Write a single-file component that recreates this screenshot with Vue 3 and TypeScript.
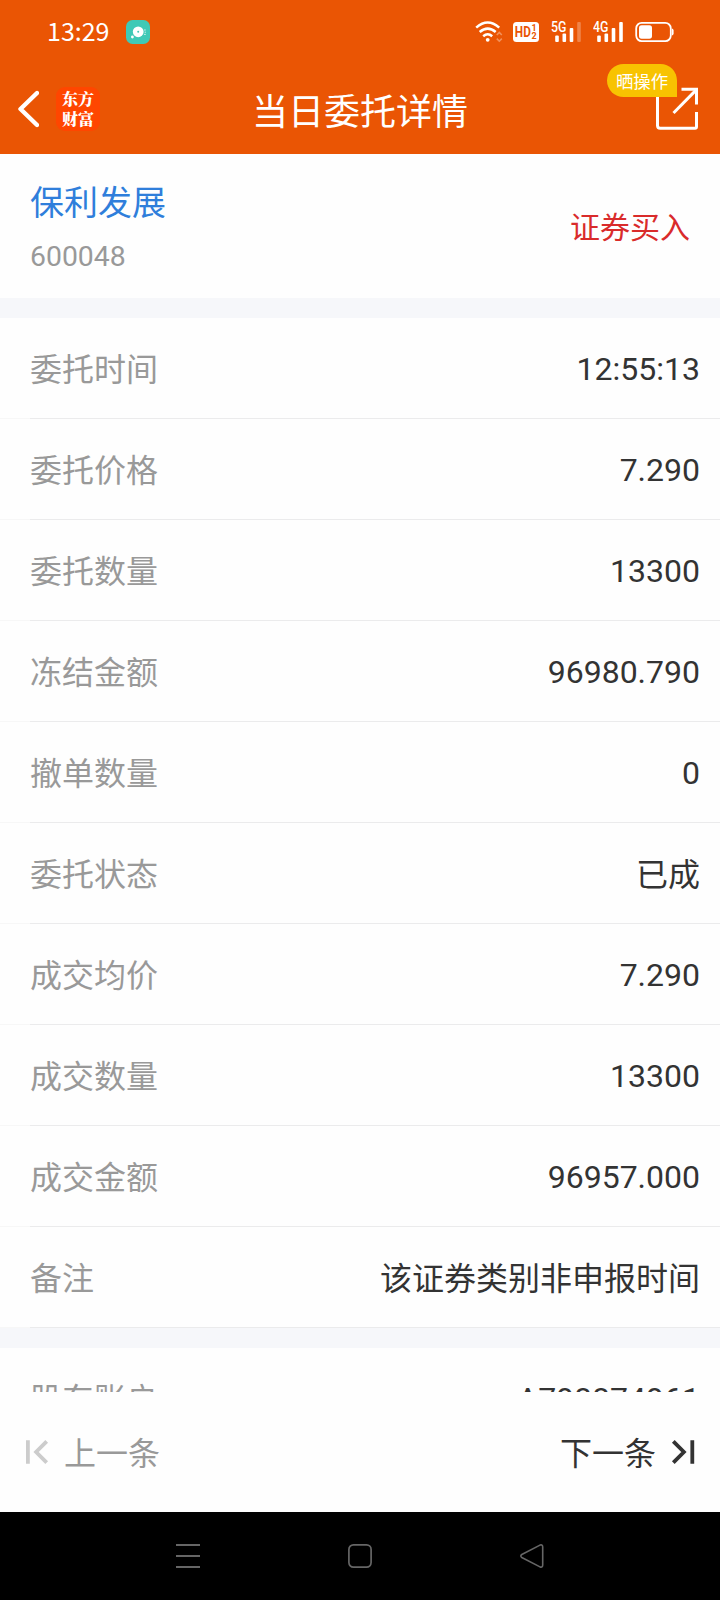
<script setup lang="ts">
interface Row {
  label: string
  value: string
}

const rows: Row[] = [
  { label: '委托时间', value: '12:55:13' },
  { label: '委托价格', value: '7.290' },
  { label: '委托数量', value: '13300' },
  { label: '冻结金额', value: '96980.790' },
  { label: '撤单数量', value: '0' },
  { label: '委托状态', value: '已成' },
  { label: '成交均价', value: '7.290' },
  { label: '成交数量', value: '13300' },
  { label: '成交金额', value: '96957.000' },
  { label: '备注', value: '该证券类别非申报时间' },
]

const accountRows: Row[] = [{ label: '股东账户', value: 'A798874961' }]

const isHan = (text: string): boolean => /[\u4e00-\u9fff]/.test(text)
</script>

<template>
  <div class="screen">
    <div class="status">
      <span class="clock">13:29</span>
      <svg class="app-dot" width="24" height="24" viewBox="0 0 24 24">
        <rect width="24" height="24" rx="6.5" fill="#3fc9b6" />
        <circle cx="12.2" cy="11.8" r="5.4" fill="#fff" />
        <circle cx="12.2" cy="11.8" r="1" fill="#3fc9b6" />
        <circle cx="6.4" cy="17" r="1.4" fill="#fff" />
        <path d="M18 10h1.8M18.6 12.2h1.4M18 14.4h1.8" stroke="#fff" stroke-width="1" opacity=".7" />
      </svg>
      <div class="indicators">
        <svg class="wifi" width="28" height="22" viewBox="0 0 28 22" fill="none" stroke="#fff">
          <path d="M1.2 6.6Q12.7-3.6 24.2 6.6M4.7 11Q12.7 4.2 20.7 11M8.2 15.2Q12.7 11.3 17.2 15.2" stroke-width="2.5" />
          <circle cx="12.7" cy="18.8" r="1.9" fill="#fff" stroke="none" />
          <path d="M21.8 14l2.5-2.6 2.5 2.6M21.8 17.6l2.5 2.6 2.5-2.6" stroke-width="1.6" opacity=".35" />
        </svg>
        <svg class="hd" width="26" height="20" viewBox="0 0 26 20">
          <rect width="26" height="20" rx="3.5" fill="#fff" />
          <text class="hd-main" x="1.8" y="15.4" textLength="16" lengthAdjust="spacingAndGlyphs">HD</text>
          <text class="hd-sim" x="18.600" y="8.800">1</text>
          <text class="hd-sim" x="18.600" y="16.600">2</text>
        </svg>
        <svg class="net" width="31" height="22" viewBox="0 0 31 22" fill="#fff">
          <text x="0" y="11.2" textLength="15.4" lengthAdjust="spacingAndGlyphs">5G</text>
          <rect x="4.2" y="14.5" width="3.6" height="6.5" rx="1" />
          <rect x="11.5" y="12.5" width="3.6" height="8.5" rx="1" />
          <rect x="18.7" y="7" width="3.6" height="14" rx="1" />
          <rect x="26.2" y="1" width="3.6" height="20" rx="1" opacity=".28" />
        </svg>
        <svg class="net" width="31" height="22" viewBox="0 0 31 22" fill="#fff">
          <text x="0" y="11.2" textLength="15.4" lengthAdjust="spacingAndGlyphs">4G</text>
          <rect x="4.2" y="14.5" width="3.6" height="6.5" rx="1" />
          <rect x="11.5" y="12.5" width="3.6" height="8.5" rx="1" />
          <rect x="18.7" y="7" width="3.6" height="14" rx="1" />
          <rect x="26.2" y="1" width="3.6" height="20" rx="1" />
        </svg>
        <svg width="39" height="22" viewBox="0 0 39 22">
          <rect x="1.2" y="1.9" width="34.6" height="18.2" rx="5.5" fill="none" stroke="#fff" stroke-width="1.8" />
          <rect x="4" y="4.3" width="13" height="13.4" rx="2.6" fill="#fff" />
          <path d="M37 7.5q1.6.3 1.6 2v3q0 1.7-1.6 2z" fill="#fff" />
        </svg>
      </div>
    </div>

    <header class="header">
      <svg class="back" width="22" height="38" viewBox="0 0 22 38" fill="none" stroke="#fff" stroke-width="4.4" stroke-linecap="round" stroke-linejoin="round">
        <path d="M20 3L3.500 19L20 35" />
      </svg>
      <div class="logo"><span>东方</span><span>财富</span></div>
      <h1 class="title">当日委托详情</h1>
      <div class="share">
        <svg width="44" height="44" viewBox="0 0 44 44" fill="none" stroke="#fff" stroke-width="3">
          <path d="M1.500 3.400V38.600Q1.500 41.300 4.200 41.300H39Q40.500 41.300 40.500 39.800V25" />
          <path d="M25.500 2.300H40.500V17.500" />
          <path d="M17.500 26L40.500 2.600" />
        </svg>
        <span class="badge">晒操作</span>
      </div>
    </header>

    <section class="stock">
      <div class="ident">
        <div class="name">保利发展</div>
        <div class="code">600048</div>
      </div>
      <div class="side">证券买入</div>
    </section>

    <div class="gap"></div>
    <section class="list">
      <div v-for="row in rows" :key="row.label" class="row">
        <span class="label han">{{ row.label }}</span>
        <span :class="{ han: isHan(row.value) }">{{ row.value }}</span>
      </div>
    </section>
    <div class="gap"></div>
    <section class="list account">
      <div v-for="row in accountRows" :key="row.label" class="row">
        <span class="label han">{{ row.label }}</span>
        <span :class="{ han: isHan(row.value) }">{{ row.value }}</span>
      </div>
    </section>

    <footer class="pager">
      <div class="prev">
        <svg width="24" height="26" viewBox="0 0 24 26" fill="none" stroke="#ccc" stroke-width="3.800">
          <path d="M2.900 1.300V24.700M21.700 2.300L11.100 13L21.700 23.700" />
        </svg>
        <span class="step">上一条</span>
      </div>
      <div class="next">
        <span class="step">下一条</span>
        <svg width="24" height="26" viewBox="0 0 24 26" fill="none" stroke="#333" stroke-width="3.800">
          <path d="M21.300 1.300V24.700M2.300 2.300L12.900 13L2.300 23.700" />
        </svg>
      </div>
    </footer>

    <nav class="nav">
      <svg width="24" height="24" viewBox="0 0 24 24" stroke="#666" stroke-width="2">
        <path d="M0 1H24M0 12H24M0 23H24" />
      </svg>
      <svg width="24" height="24" viewBox="0 0 24 24" fill="none" stroke="#666" stroke-width="1.700">
        <rect x=".9" y=".9" width="22.200" height="22.200" rx="4.500" />
      </svg>
      <svg width="24" height="24" viewBox="0 0 24 24" fill="none" stroke="#666" stroke-width="1.600" stroke-linejoin="round">
        <path d="M1.800 10.500L20 1.100Q22.700 .2 22.700 3V21Q22.700 23.800 20 22.900L1.800 13.500Q-.2 12 1.800 10.500Z" />
      </svg>
    </nav>
  </div>
</template>

<style>
body {
  margin: 0;
}
</style>

<style scoped>
.screen {
  display: flex;
  flex-direction: column;
  width: 720px;
  height: 1600px;
  overflow: hidden;
  background: #fefefe;
  font-family: Roboto, 'Noto Sans CJK SC', sans-serif;
  color: #333;
}
svg {
  display: block;
  flex: none;
}
.status {
  display: flex;
  align-items: center;
  height: 64px;
  flex: none;
  padding: 0 46px 0 47px;
  box-sizing: border-box;
  background: #ea5504;
  color: #fff;
}
.clock {
  width: 79px;
  margin-bottom: 4px;
  font: 25px/30px 'Noto Sans CJK SC', sans-serif;
}
.indicators {
  display: flex;
  align-items: center;
  margin-left: auto;
}
.wifi {
  margin-right: 10px;
}
.hd {
  margin-right: 12px;
  fill: #ea5504;
}
.net {
  margin-right: 11px;
}
.net text {
  font: 500 14px Roboto, sans-serif;
}
.hd-main {
  font: 700 15px Roboto, sans-serif;
}
.hd-sim {
  font: 700 9px Roboto, sans-serif;
}
.header {
  display: flex;
  align-items: center;
  flex: none;
  height: 90px;
  padding: 0 20px 0 17px;
  box-sizing: border-box;
  background: #ea5504;
  color: #fff;
}
.back {
  margin-right: 17px;
}
.logo {
  display: flex;
  flex-direction: column;
  align-items: center;
  justify-content: center;
  width: 44px;
  height: 44px;
  border-radius: 9px;
  background: #ff4600;
  font: 900 16px/20px 'Noto Serif CJK SC', 'Noto Sans CJK SC', serif;
}
.title {
  flex: 1;
  margin: 7px 36px 0 0;
  text-align: center;
  font-size: 36px;
  line-height: 44px;
  font-weight: 400;
  white-space: nowrap;
}
.share {
  position: relative;
  flex: none;
}
.badge {
  position: absolute;
  right: 23px;
  top: -23px;
  width: 70px;
  height: 33px;
  border-radius: 17px 17px 0 17px;
  background: #f8c301;
  font-size: 17.4px;
  line-height: 36px;
  text-align: center;
  white-space: nowrap;
}
.stock {
  display: flex;
  align-items: center;
  justify-content: space-between;
  flex: none;
  height: 144px;
  padding: 4px 30px 0;
  box-sizing: border-box;
}
.name {
  margin-top: 1px;
  color: #2f7edb;
  font-size: 34px;
  line-height: 48px;
}
.code {
  margin-top: 8px;
  color: #999;
  font-size: 28.4px;
  line-height: 44px;
}
.side {
  color: #d92b2b;
  font-size: 30px;
  line-height: 40px;
}
.gap {
  flex: none;
  height: 20px;
  background: #f6f7fa;
}
.list {
  flex: none;
}
.account {
  height: 44px;
  overflow: hidden;
}
.row {
  display: flex;
  align-items: center;
  justify-content: space-between;
  height: 101px;
  padding: 0 20px 0 30px;
  box-sizing: border-box;
  font-size: 32px;
  background: linear-gradient(90deg, #f7f7f7 30px, #ebebec 30px) bottom / 100% 1px no-repeat;
}
.label {
  color: #999;
}
.han {
  margin-bottom: 4px;
}
.pager {
  display: flex;
  align-items: center;
  justify-content: space-between;
  flex: none;
  height: 120px;
  padding: 0 25px;
  box-sizing: border-box;
  font-size: 32px;
}
.prev,
.next {
  display: flex;
  align-items: center;
  gap: 15px;
}
.step {
  margin-bottom: 3px;
}
.prev {
  color: #999;
}
.nav {
  display: flex;
  align-items: center;
  justify-content: space-between;
  flex: none;
  height: 88px;
  padding: 0 176px;
  box-sizing: border-box;
  background: #000;
}
</style>
